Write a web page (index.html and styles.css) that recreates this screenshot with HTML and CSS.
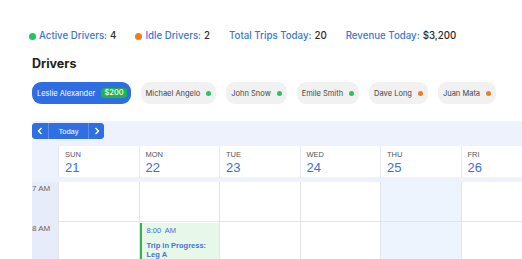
FILE: index.html
```html
<!DOCTYPE html>
<html lang="en">
<head>
<meta charset="UTF-8">
<title>Dispatch Dashboard</title>
<link rel="stylesheet" href="styles.css">
</head>
<body>
<main class="dash">

<div class="stats">
  <span class="stat"><i class="dot green"></i><span class="label">Active Drivers:</span> 4</span>
  <span class="stat"><i class="dot orange"></i><span class="label">Idle Drivers:</span> 2</span>
  <span class="stat"><span class="label">Total Trips Today:</span> 20</span>
  <span class="stat"><span class="label">Revenue Today:</span> $3,200</span>
</div>

<h2 class="title">Drivers</h2>

<div class="chips">
  <span class="chip active">Leslie Alexander <b class="badge">$200</b></span>
  <span class="chip">Michael Angelo <i class="dot sm green"></i></span>
  <span class="chip">John Snow <i class="dot sm green"></i></span>
  <span class="chip">Emile Smith <i class="dot sm green"></i></span>
  <span class="chip">Dave Long <i class="dot sm orange"></i></span>
  <span class="chip">Juan Mata <i class="dot sm orange"></i></span>
</div>

<div class="calendar">
  <div class="toolbar">
    <div class="btn-group">
      <button class="btn arrow" type="button">
        <svg width="6" height="8" viewBox="0 0 6 8"><path d="M4.5 1 L1.5 4 L4.5 7" fill="none" stroke="#fff" stroke-width="1.4"/></svg>
      </button>
      <button class="btn today" type="button">Today</button>
      <button class="btn arrow" type="button">
        <svg width="6" height="8" viewBox="0 0 6 8"><path d="M1.5 1 L4.5 4 L1.5 7" fill="none" stroke="#fff" stroke-width="1.4"/></svg>
      </button>
    </div>
  </div>

  <div class="week-head">
    <div class="gutter"></div>
    <div class="day-head"><span class="dow">SUN</span><span class="date">21</span></div>
    <div class="day-head"><span class="dow">MON</span><span class="date">22</span></div>
    <div class="day-head"><span class="dow">TUE</span><span class="date">23</span></div>
    <div class="day-head"><span class="dow">WED</span><span class="date">24</span></div>
    <div class="day-head"><span class="dow">THU</span><span class="date">25</span></div>
    <div class="day-head"><span class="dow">FRI</span><span class="date">26</span></div>
  </div>

  <div class="week-body">
    <div class="time">7 AM</div>
    <div class="cell"></div>
    <div class="cell"></div>
    <div class="cell"></div>
    <div class="cell"></div>
    <div class="cell today-col"></div>
    <div class="cell"></div>

    <div class="time">8 AM</div>
    <div class="cell"></div>
    <div class="cell">
      <div class="event">
        <div class="ev-time">8:00&nbsp; AM</div>
        <div class="ev-title">Trip in Progress: Leg A</div>
      </div>
    </div>
    <div class="cell"></div>
    <div class="cell"></div>
    <div class="cell today-col"></div>
    <div class="cell"></div>
  </div>
</div>

</main>
</body>
</html>
```

FILE: styles.css
```css
html, body {
  margin: 0;
  background: #fff;
  overflow: hidden;
}

.dash {
  padding: 29px 0 0 29px;
  font-family: Inter, "Open Sans", sans-serif;
  color: #2b2b2b;
}

/* top stats line */
.stats {
  display: flex;
  gap: 19px;
  font-size: 9.7px;
  font-weight: 500;
  line-height: 14px;
}

.stat {
  display: flex;
  align-items: center;
  white-space: nowrap;
}

.stat .label {
  color: #3a76db;
  margin-right: 3px;
}

.dot {
  display: inline-block;
  width: 7px;
  height: 7px;
  border-radius: 50%;
  margin-right: 3px;
}
.dot.sm {
  width: 5px;
  height: 5px;
  margin: 0 0 0 6px;
}
.green { background: #22c55e; }
.orange { background: #ea7d25; }

.title {
  margin: 13px 0 0 3px;
  font-size: 12.5px;
  font-weight: 700;
  line-height: 16px;
  color: #222;
}

/* driver chips */
.chips {
  display: flex;
  gap: 10px;
  margin: 10px 0 0 3px;
}

.chip {
  display: flex;
  align-items: center;
  height: 22px;
  padding: 0 5px 0 5px;
  border-radius: 9px;
  background: #f1f1f1;
  font-size: 7.5px;
  color: #444;
  white-space: nowrap;
}

.chip.active {
  background: #2e6ee2;
  color: #fff;
  padding: 0 4px 0 5px;
}

.badge {
  margin-left: 6px;
  padding: 1px 3px;
  border-radius: 3px;
  background: #22b24c;
  font-weight: 500;
  font-size: 7.5px;
  line-height: 8px;
}

/* calendar */
.calendar {
  margin: 17px 0 0 3px;
  width: 490px;
  background: #eef2fc;
  font-family: "Liberation Sans", Arial, sans-serif;
}

.toolbar {
  height: 16px;
  margin-bottom: 9px;
}

.btn-group {
  display: inline-flex;
  height: 16px;
  border-radius: 4px;
  overflow: hidden;
  background: #2f6fe2;
}

.btn {
  display: flex;
  align-items: center;
  justify-content: center;
  height: 16px;
  padding: 0;
  border: 0;
  border-left: 1px solid #5d8fe9;
  background: #2f6fe2;
  color: #fff;
  font-family: "Liberation Sans", Arial, sans-serif;
  font-size: 7.5px;
}
.btn:first-child { border-left: 0; }
.btn.arrow { width: 16px; }
.btn.today { width: 40px; }

.week-head,
.week-body {
  display: grid;
  grid-template-columns: 26px repeat(5, 80.5px) 1fr;
}

.week-head {
  height: 31px;
  margin-bottom: 5px;
}

.day-head {
  display: flex;
  flex-direction: column;
  padding: 4px 0 0 6px;
  background: #fff;
  border-left: 1px solid #e7e9ee;
}

.dow {
  font-size: 7.5px;
  color: #555;
  line-height: 9px;
}

.date {
  font-size: 13px;
  color: #3a6fd8;
  line-height: 16px;
  margin-top: 1px;
}

.week-body {
  grid-auto-rows: 40px;
}

.time {
  font-size: 8px;
  color: #666;
  padding-top: 2px;
  background: #e6ecfa;
}

.cell {
  background: #fff;
  border-left: 1px solid #e4e4e4;
  border-bottom: 1px solid #e4e4e4;
}

.cell.today-col {
  background: #eef4fd;
}

.event {
  height: 100%;
  margin-top: 1px;
  padding: 3px 0 0 5px;
  background: #e7f7ea;
  border-left: 2px solid #2fb552;
  color: #3a6fd8;
  font-size: 7.5px;
  line-height: 9px;
  box-sizing: border-box;
}

.ev-title {
  margin-top: 6px;
  width: 60px;
  font-weight: 700;
  color: #4275d8;
}
```
